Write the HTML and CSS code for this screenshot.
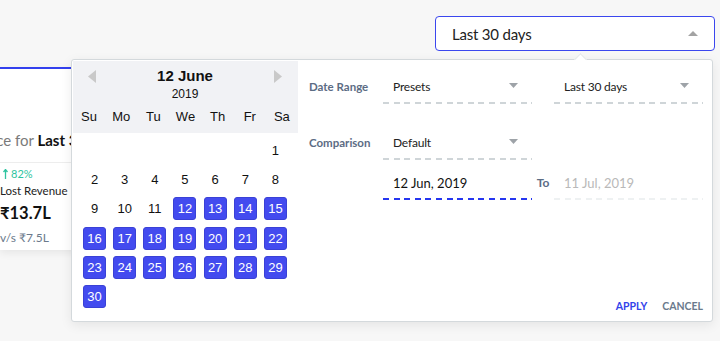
FILE: index.html
```html
<!DOCTYPE html>
<html lang="en">
<head>
<meta charset="utf-8">
<title>Date range picker</title>
<link rel="stylesheet" href="styles.css">
</head>
<body>
<div class="page">
  <header class="toolbar">
    <button class="range-btn" type="button">
      <span>Last 30 days</span>
      <svg class="caret" width="10" height="5" viewBox="0 0 10 5"><path d="M0 5 L5 0 L10 5 Z" fill="#a3a3a3"/></svg>
    </button>
  </header>

  <section class="report">
    <div class="report-title"><span class="title-text"><span class="muted">Performance for </span><strong>Last 30 days</strong></span></div>
    <div class="stat">
      <div class="delta"><svg width="5" height="10" viewBox="0 0 5 10"><path d="M2.5 0.5 V10 M0.5 3 L2.5 0.5 L4.5 3" stroke="#2ec4a0" stroke-width="1.3" fill="none"/></svg>82%</div>
      <div class="stat-label">Lost Revenue</div>
      <div class="stat-value">₹13.7L</div>
      <div class="stat-compare">v/s ₹7.5L</div>
    </div>
  </section>

  <div class="popover">
    <div class="calendar">
      <div class="cal-head">
        <div class="cal-nav">
          <svg class="nav-arrow" width="8" height="13" viewBox="0 0 8 13"><path d="M8 0 L0 6.5 L8 13 Z" fill="#c9c9c9"/></svg>
          <div class="cal-title">
            <div class="cal-month">12 June</div>
            <div class="cal-year">2019</div>
          </div>
          <svg class="nav-arrow" width="8" height="13" viewBox="0 0 8 13"><path d="M0 0 L8 6.5 L0 13 Z" fill="#c9c9c9"/></svg>
        </div>
        <div class="weekdays">
          <span>Su</span><span>Mo</span><span>Tu</span><span>We</span><span>Th</span><span>Fr</span><span>Sa</span>
        </div>
      </div>
      <div class="days">
        <span></span><span></span><span></span><span></span><span></span><span></span><span class="day">1</span>
        <span class="day">2</span><span class="day">3</span><span class="day">4</span><span class="day">5</span><span class="day">6</span><span class="day">7</span><span class="day">8</span>
        <span class="day">9</span><span class="day">10</span><span class="day">11</span><span class="day sel">12</span><span class="day sel">13</span><span class="day sel">14</span><span class="day sel">15</span>
        <span class="day sel">16</span><span class="day sel">17</span><span class="day sel">18</span><span class="day sel">19</span><span class="day sel">20</span><span class="day sel">21</span><span class="day sel">22</span>
        <span class="day sel">23</span><span class="day sel">24</span><span class="day sel">25</span><span class="day sel">26</span><span class="day sel">27</span><span class="day sel">28</span><span class="day sel">29</span>
        <span class="day sel">30</span>
      </div>
    </div>

    <div class="options">
      <div class="form">
        <div class="label">Date Range</div>
        <div class="field select"><span>Presets</span><svg class="sel-caret" width="9" height="5" viewBox="0 0 9 5"><path d="M0 0 L9 0 L4.5 5 Z" fill="#9ea3a8"/></svg></div>
        <div></div>
        <div class="field select"><span>Last 30 days</span><svg class="sel-caret" width="9" height="5" viewBox="0 0 9 5"><path d="M0 0 L9 0 L4.5 5 Z" fill="#9ea3a8"/></svg></div>

        <div class="label row2">Comparison</div>
        <div class="field select row2"><span>Default</span><svg class="sel-caret" width="9" height="5" viewBox="0 0 9 5"><path d="M0 0 L9 0 L4.5 5 Z" fill="#9ea3a8"/></svg></div>
        <div class="row2"></div>
        <div class="row2"></div>

        <div></div>
        <div class="field date active"><span>12 Jun, 2019</span></div>
        <div class="to">To</div>
        <div class="field date inactive"><span>11 Jul, 2019</span></div>
      </div>
      <div class="actions">
        <button class="btn apply" type="button">APPLY</button>
        <button class="btn cancel" type="button">CANCEL</button>
      </div>
    </div>
  </div>
</div>
</body>
</html>
```

FILE: styles.css
```css
* { box-sizing: border-box; }

html, body {
  margin: 0;
  padding: 0;
}

body {
  background: #f7f7f7;
  font-family: Lato, "Liberation Sans", sans-serif;
  color: #222;
}

.page {
  position: relative;
  width: 720px;
  height: 341px;
  overflow: hidden;
  background: #f7f7f7;
}

/* top toolbar */
.toolbar {
  display: flex;
  justify-content: flex-end;
  padding: 16px 5px 0 0;
}

.range-btn {
  width: 280px;
  height: 35px;
  display: flex;
  align-items: center;
  justify-content: space-between;
  padding: 0 16px;
  background: #fff;
  border: 1.5px solid #3b47ee;
  border-radius: 4px;
  font-family: Lato, sans-serif;
  font-size: 15px;
  letter-spacing: -0.2px;
  color: #222;
}

.caret { display: block; }

/* background report card */
.report {
  margin-top: 16px;
  width: 420px;
  background: #fff;
  border-top: 2px solid #3340ee;
  box-shadow: 0 3px 8px rgba(0, 0, 0, 0.07);
}

.report-title {
  height: 94px;
  display: flex;
  align-items: flex-end;
  padding-bottom: 12px;
  overflow: hidden;
  border-bottom: 1px solid #ededed;
  font-size: 15px;
  line-height: 20px;
  white-space: nowrap;
}

.title-text {
  margin-left: -73px;
}

.muted { color: #7a7a7a; }
.report-title strong { color: #111; font-weight: 700; }

.stat {
  padding: 3px 0 4px 0;
}

.delta {
  display: flex;
  align-items: center;
  gap: 3px;
  padding-left: 3px;
  font-size: 11px;
  line-height: 16px;
  color: #2ec4a0;
}

.stat-label {
  font-size: 11.5px;
  line-height: 18px;
  color: #222;
}

.stat-value {
  font-size: 16.5px;
  font-weight: 700;
  line-height: 26px;
  color: #111;
}

.stat-compare {
  margin-top: 4px;
  font-size: 12px;
  line-height: 16px;
  color: #6b7a8c;
}

/* popover */
.popover {
  position: absolute;
  left: 71px;
  top: 59px;
  width: 642px;
  height: 263px;
  display: flex;
  background: #fff;
  border: 1px solid #d4d9dc;
  border-radius: 3px;
  box-shadow: 0 3px 12px rgba(0, 0, 0, 0.08);
}

.popover::before {
  content: "";
  position: absolute;
  left: 504px;
  top: -5px;
  width: 8px;
  height: 8px;
  background: #fff;
  border-top: 1px solid #e2e5e7;
  border-left: 1px solid #e2e5e7;
  transform: rotate(45deg);
}

/* calendar */
.calendar {
  width: 225px;
  margin-top: 1px;
  margin-left: 1px;
  font-family: "Liberation Sans", Arial, sans-serif;
}

.cal-head {
  height: 72px;
  background: #f1f2f5;
  padding-top: 6px;
}

.cal-nav {
  display: flex;
  justify-content: space-between;
  align-items: flex-start;
  padding: 0 16px 0 15px;
}

.nav-arrow {
  display: block;
  margin-top: 3px;
}

.cal-title {
  text-align: center;
}

.cal-month {
  font-size: 15px;
  font-weight: 700;
  line-height: 18px;
  color: #111;
}

.cal-year {
  margin-top: 2px;
  font-size: 12px;
  line-height: 14px;
  color: #111;
}

.weekdays {
  display: grid;
  grid-template-columns: repeat(7, 1fr);
  margin-top: 8px;
  font-size: 13px;
  line-height: 16px;
  text-align: center;
  color: #111;
}

.days {
  display: grid;
  grid-template-columns: repeat(7, 23px);
  grid-auto-rows: 23px;
  row-gap: 6.2px;
  justify-content: space-between;
  padding: 6px 11px 0 10px;
}

.day {
  display: flex;
  align-items: center;
  justify-content: center;
  font-size: 13px;
  color: #111;
  border-radius: 3px;
}

.day.sel {
  background: #434bef;
  border: 1px solid #3a41d6;
  color: #fff;
}

/* options panel */
.options {
  flex: 1;
  display: flex;
  flex-direction: column;
  padding: 17px 9px 7px 11px;
}

.form {
  display: grid;
  grid-template-columns: 74px 149px 22px 149px;
  align-items: start;
}

.row2 { margin-top: 29px; }
.form > :nth-child(n+9) { margin-top: 13px; }

.label {
  font-size: 11.5px;
  font-weight: 700;
  line-height: 20px;
  color: #5c6c84;
}

.field {
  position: relative;
  height: 27px;
  display: flex;
  align-items: flex-start;
  justify-content: space-between;
  padding: 0 10px;
  font-size: 12px;
  line-height: 20px;
}

.select { letter-spacing: -0.2px; }

.field::after {
  content: "";
  position: absolute;
  left: 0;
  right: 0;
  bottom: 0;
  height: 2px;
}

.select::after {
  background: repeating-linear-gradient(90deg, #cfd5d8 0 6px, transparent 6px 10.6px);
}

.sel-caret {
  display: block;
  margin-top: 6px;
  margin-right: 4px;
}

.date { font-size: 13px; }

.date.active { color: #111; }
.date.active::after {
  background: repeating-linear-gradient(90deg, #2536f0 0 6px, transparent 6px 10.6px);
}

.date.inactive { color: #b9b9b9; }
.date.inactive::after {
  background: repeating-linear-gradient(90deg, #eef1f2 0 6px, transparent 6px 10.6px);
}

.to {
  margin-top: 13px;
  text-align: center;
  font-size: 12px;
  font-weight: 700;
  line-height: 20px;
  color: #5c6c84;
}

.actions {
  margin-top: auto;
  display: flex;
  justify-content: flex-end;
  gap: 15px;
}

.btn {
  padding: 0;
  background: none;
  border: none;
  font-family: Lato, sans-serif;
  font-size: 10.5px;
  font-weight: 700;
  line-height: 16px;
}

.apply { color: #3343ea; }
.cancel { color: #6b7a8c; }
```
